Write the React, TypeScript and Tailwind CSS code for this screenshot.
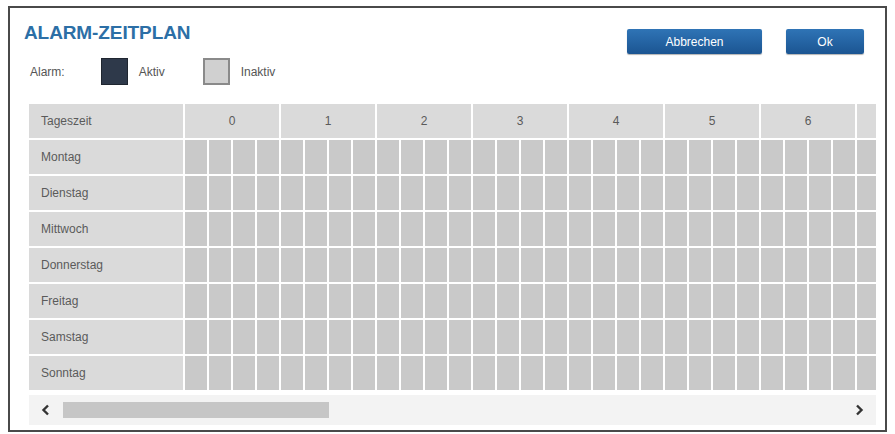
const DAYS = ['Montag', 'Dienstag', 'Mittwoch', 'Donnerstag', 'Freitag', 'Samstag', 'Sonntag'];
// only the hours that fit in the visible part of the scroll area
const HOURS = [0, 1, 2, 3, 4, 5, 6, 7];

function Chevron({ dir }: { dir: 'left' | 'right' }) {
  return (
    <svg width="10" height="12" viewBox="0 0 10 12">
      <polyline
        points={dir === 'left' ? '7,1.5 2.5,6 7,10.5' : '3,1.5 7.5,6 3,10.5'}
        fill="none"
        stroke="#333"
        strokeWidth="2.4"
      />
    </svg>
  );
}

export default function App() {
  return (
    <div className="w-[895px] h-[434px] bg-white pt-[6px] px-[8px] font-['Liberation_Sans',Arial,sans-serif]">
      <div className="h-[426px] border-2 border-[#4a4a4a] bg-white flex flex-col">
        {/* Header */}
        <div className="flex justify-between">
          <div className="pl-[14px] pt-[15px]">
            <h1 className="text-[19px] leading-[20px] font-bold text-[#2c6fa6] tracking-[-0.1px]">
              ALARM-ZEITPLAN
            </h1>
            <div className="flex items-center mt-[15px] pl-[6px] text-[12px] text-[#555]">
              <span>Alarm:</span>
              <span className="ml-[36px] w-[27px] h-[27px] bg-[#2e394a] border border-[#1f2630]" />
              <span className="ml-[11px]">Aktiv</span>
              <span className="ml-[38px] w-[27px] h-[27px] bg-[#d0d0d0] border-2 border-[#8a8a8a]" />
              <span className="ml-[11px]">Inaktiv</span>
            </div>
          </div>
          <div className="flex gap-[24px] pt-[21px] pr-[21px]">
            <button className="w-[135px] h-[25px] rounded-[2px] bg-gradient-to-b from-[#2f74b6] to-[#1b5592] text-white text-[12px] shadow-[0_1px_1px_rgba(0,0,0,0.3)]">
              Abbrechen
            </button>
            <button className="w-[78px] h-[25px] rounded-[2px] bg-gradient-to-b from-[#2f74b6] to-[#1b5592] text-white text-[12px] shadow-[0_1px_1px_rgba(0,0,0,0.3)]">
              Ok
            </button>
          </div>
        </div>

        {/* Schedule grid */}
        <div className="ml-[19px] mr-[9px] mt-[19px] overflow-hidden">
          <div className="flex flex-col gap-[2px] bg-white w-max">
            <div className="flex gap-[2px] h-[34px] text-[12px] text-[#5a5a5a]">
              <div className="w-[154px] bg-[#dadada] flex items-center pl-[12px]">Tageszeit</div>
              {HOURS.map((h) => (
                <div key={h} className="w-[94px] bg-[#dadada] flex items-center justify-center">
                  {h < 7 ? h : ''}
                </div>
              ))}
            </div>
            {DAYS.map((d) => (
              <div key={d} className="flex gap-[2px] h-[34px]">
                <div className="w-[154px] bg-[#dadada] flex items-center pl-[12px] text-[12px] text-[#5a5a5a]">
                  {d}
                </div>
                {HOURS.map((h) =>
                  [0, 1, 2, 3].map((q) => (
                    <div key={`${h}-${q}`} className="w-[22px] bg-[#c9c9c9]" />
                  ))
                )}
              </div>
            ))}
          </div>
        </div>

        {/* Scrollbar */}
        <div className="ml-[19px] mr-[9px] mt-[5px] h-[30px] bg-[#f3f3f3] flex items-center">
          <div className="w-[34px] flex justify-center">
            <Chevron dir="left" />
          </div>
          <div className="flex-1 h-[16px]">
            <div className="w-[266px] h-[16px] bg-[#c6c6c6]" />
          </div>
          <div className="w-[34px] flex justify-center">
            <Chevron dir="right" />
          </div>
        </div>
      </div>
    </div>
  );
}
